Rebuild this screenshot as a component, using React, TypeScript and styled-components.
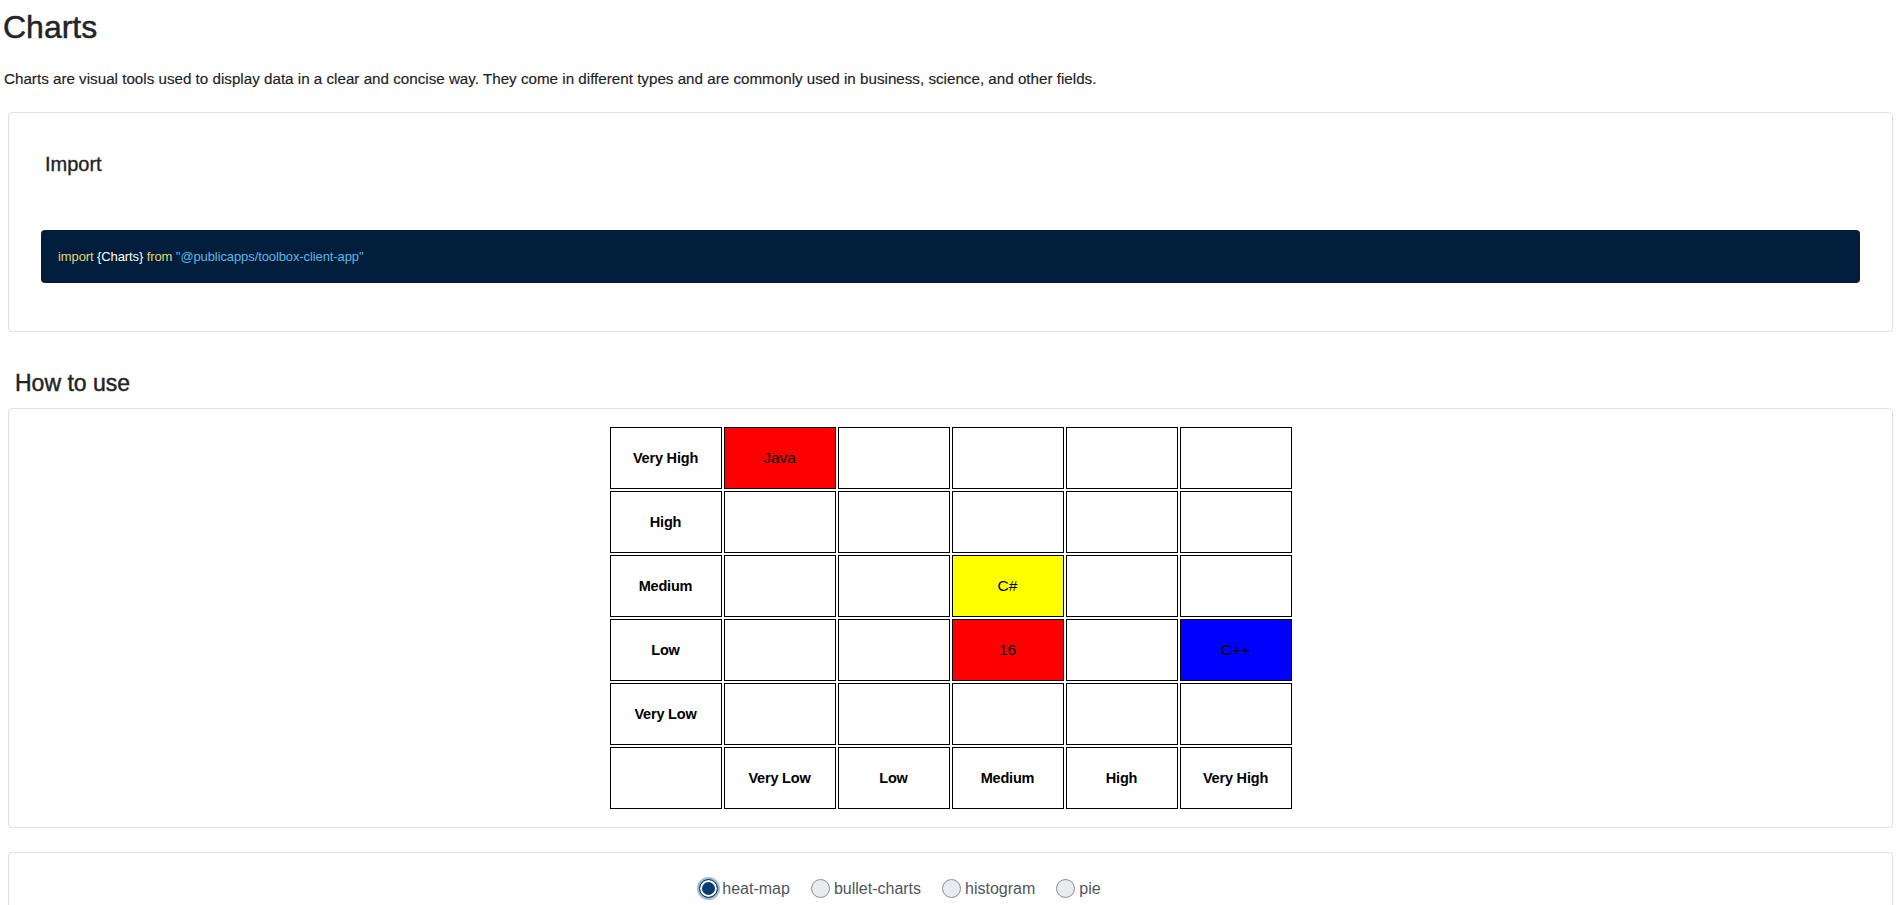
import React, { useState } from "react";
import styled, { createGlobalStyle } from "styled-components";

const GlobalStyle = createGlobalStyle`
  html, body {
    margin: 0;
    padding: 0;
    background: #ffffff;
  }
  body {
    font-family: "Liberation Sans", Arial, Helvetica, sans-serif;
    color: #212529;
  }
  * { box-sizing: border-box; }
`;

const Page = styled.div`
  padding: 8px 11px 0 4px;
`;

const Title = styled.h1`
  margin: 0 0 0 -1px;
  font-size: 32px;
  font-weight: 400;
  line-height: 1.2;
  color: #212529;
  -webkit-text-stroke: 0.5px #212529;
`;

const Lead = styled.p`
  margin: 22px 0 0;
  font-size: 15.2px;
  line-height: 22.5px;
  color: #1d2125;
  -webkit-text-stroke: 0.15px #1d2125;
`;

const Card = styled.section<{ $pad: string; $mt: number }>`
  margin: ${(p) => p.$mt}px 0 0 4px;
  border: 1px solid #dfe1e4;
  border-radius: 4px;
  background: #fff;
  padding: ${(p) => p.$pad};
`;

const CardHeading = styled.h3`
  margin: 0 0 54px 4px;
  font-size: 20px;
  font-weight: 400;
  line-height: 1.2;
  color: #212529;
  -webkit-text-stroke: 0.35px #212529;
`;

const CodeBlock = styled.pre`
  margin: 0;
  background: #001e3c;
  border-radius: 4px;
  padding: 17px 16px 17px 17px;
  font-family: "Liberation Sans", Arial, sans-serif;
  font-size: 13px;
  letter-spacing: -0.1px;
  line-height: 19px;
  white-space: pre;
`;

const Tok = styled.span<{ $c: string }>`
  color: ${(p) => p.$c};
`;

const SectionHeading = styled.h2`
  margin: 38px 0 11px 11px;
  font-size: 23px;
  font-weight: 400;
  line-height: 1.2;
  color: #212529;
  -webkit-text-stroke: 0.45px #212529;
`;

const HeatTable = styled.table`
  margin: 0 auto;
  border-collapse: separate;
  border-spacing: 2px;
`;

const Cell = styled.td<{ $bg?: string; $label?: boolean }>`
  width: 112px;
  height: 62px;
  padding: 0;
  border: 1px solid #000;
  background: ${(p) => p.$bg || "#fff"};
  text-align: center;
  vertical-align: middle;
  color: #000;
  font-size: ${(p) => (p.$label ? "14.5px" : "15.5px")};
  font-weight: ${(p) => (p.$label ? 700 : 400)};
  letter-spacing: ${(p) => (p.$label ? "-0.2px" : "0")};
`;

const RadioRow = styled.div`
  display: flex;
  justify-content: center;
  align-items: center;
  padding-right: 101px;
`;

const RadioLabel = styled.label`
  display: inline-flex;
  align-items: center;
  gap: 4px;
  margin-right: 21px;
  font-size: 16px;
  color: #50565c;
  cursor: pointer;
  &:last-child { margin-right: 0; }
`;

const RadioInput = styled.input`
  appearance: none;
  -webkit-appearance: none;
  margin: 0;
  width: 19px;
  height: 19px;
  border-radius: 50%;
  border: 1px solid #8a8f94;
  background: #e9ecef;
  cursor: pointer;
  &:checked {
    border: 1.5px solid #073d73;
    background: #073d73;
    box-shadow: inset 0 0 0 2px #fff, 0 0 0 2px rgba(7, 61, 115, 0.35);
  }
`;

const yLabels = ["Very High", "High", "Medium", "Low", "Very Low"];
const xLabels = ["Very Low", "Low", "Medium", "High", "Very High"];

type Datum = { text: string; color: string };
const data: Record<string, Datum> = {
  "0-0": { text: "Java", color: "#ff0000" },
  "2-2": { text: "C#", color: "#ffff00" },
  "3-2": { text: "16", color: "#ff0000" },
  "3-4": { text: "C++", color: "#0000ff" },
};

const options = ["heat-map", "bullet-charts", "histogram", "pie"];

export default function App() {
  const [chart, setChart] = useState("heat-map");
  return (
    <Page>
      <GlobalStyle />
      <Title>Charts</Title>
      <Lead>
        Charts are visual tools used to display data in a clear and concise way. They come in different types and are
        commonly used in business, science, and other fields.
      </Lead>

      <Card $pad="39px 32px 48px 32px" $mt={21}>
        <CardHeading>Import</CardHeading>
        <CodeBlock>
          <Tok $c="#e3d873">import</Tok>
          <Tok $c="#ffffff"> {"{Charts}"} </Tok>
          <Tok $c="#e3d873">from</Tok>
          <Tok $c="#5cb6e6"> "@publicapps/toolbox-client-app"</Tok>
        </CodeBlock>
      </Card>

      <SectionHeading>How to use</SectionHeading>
      <Card $pad="16px" $mt={0}>
        <HeatTable>
          <tbody>
            {yLabels.map((y, r) => (
              <tr key={y}>
                <Cell $label>{y}</Cell>
                {xLabels.map((_, c) => {
                  const d = data[`${r}-${c}`];
                  return (
                    <Cell key={c} $bg={d?.color}>
                      {d?.text}
                    </Cell>
                  );
                })}
              </tr>
            ))}
            <tr>
              <Cell $label />
              {xLabels.map((x) => (
                <Cell key={x} $label>
                  {x}
                </Cell>
              ))}
            </tr>
          </tbody>
        </HeatTable>
      </Card>

      <Card $pad="26px 15px 40px" $mt={24}>
        <RadioRow>
          {options.map((o) => (
            <RadioLabel key={o}>
              <RadioInput type="radio" name="chart" checked={chart === o} onChange={() => setChart(o)} />
              {o}
            </RadioLabel>
          ))}
        </RadioRow>
      </Card>
    </Page>
  );
}
